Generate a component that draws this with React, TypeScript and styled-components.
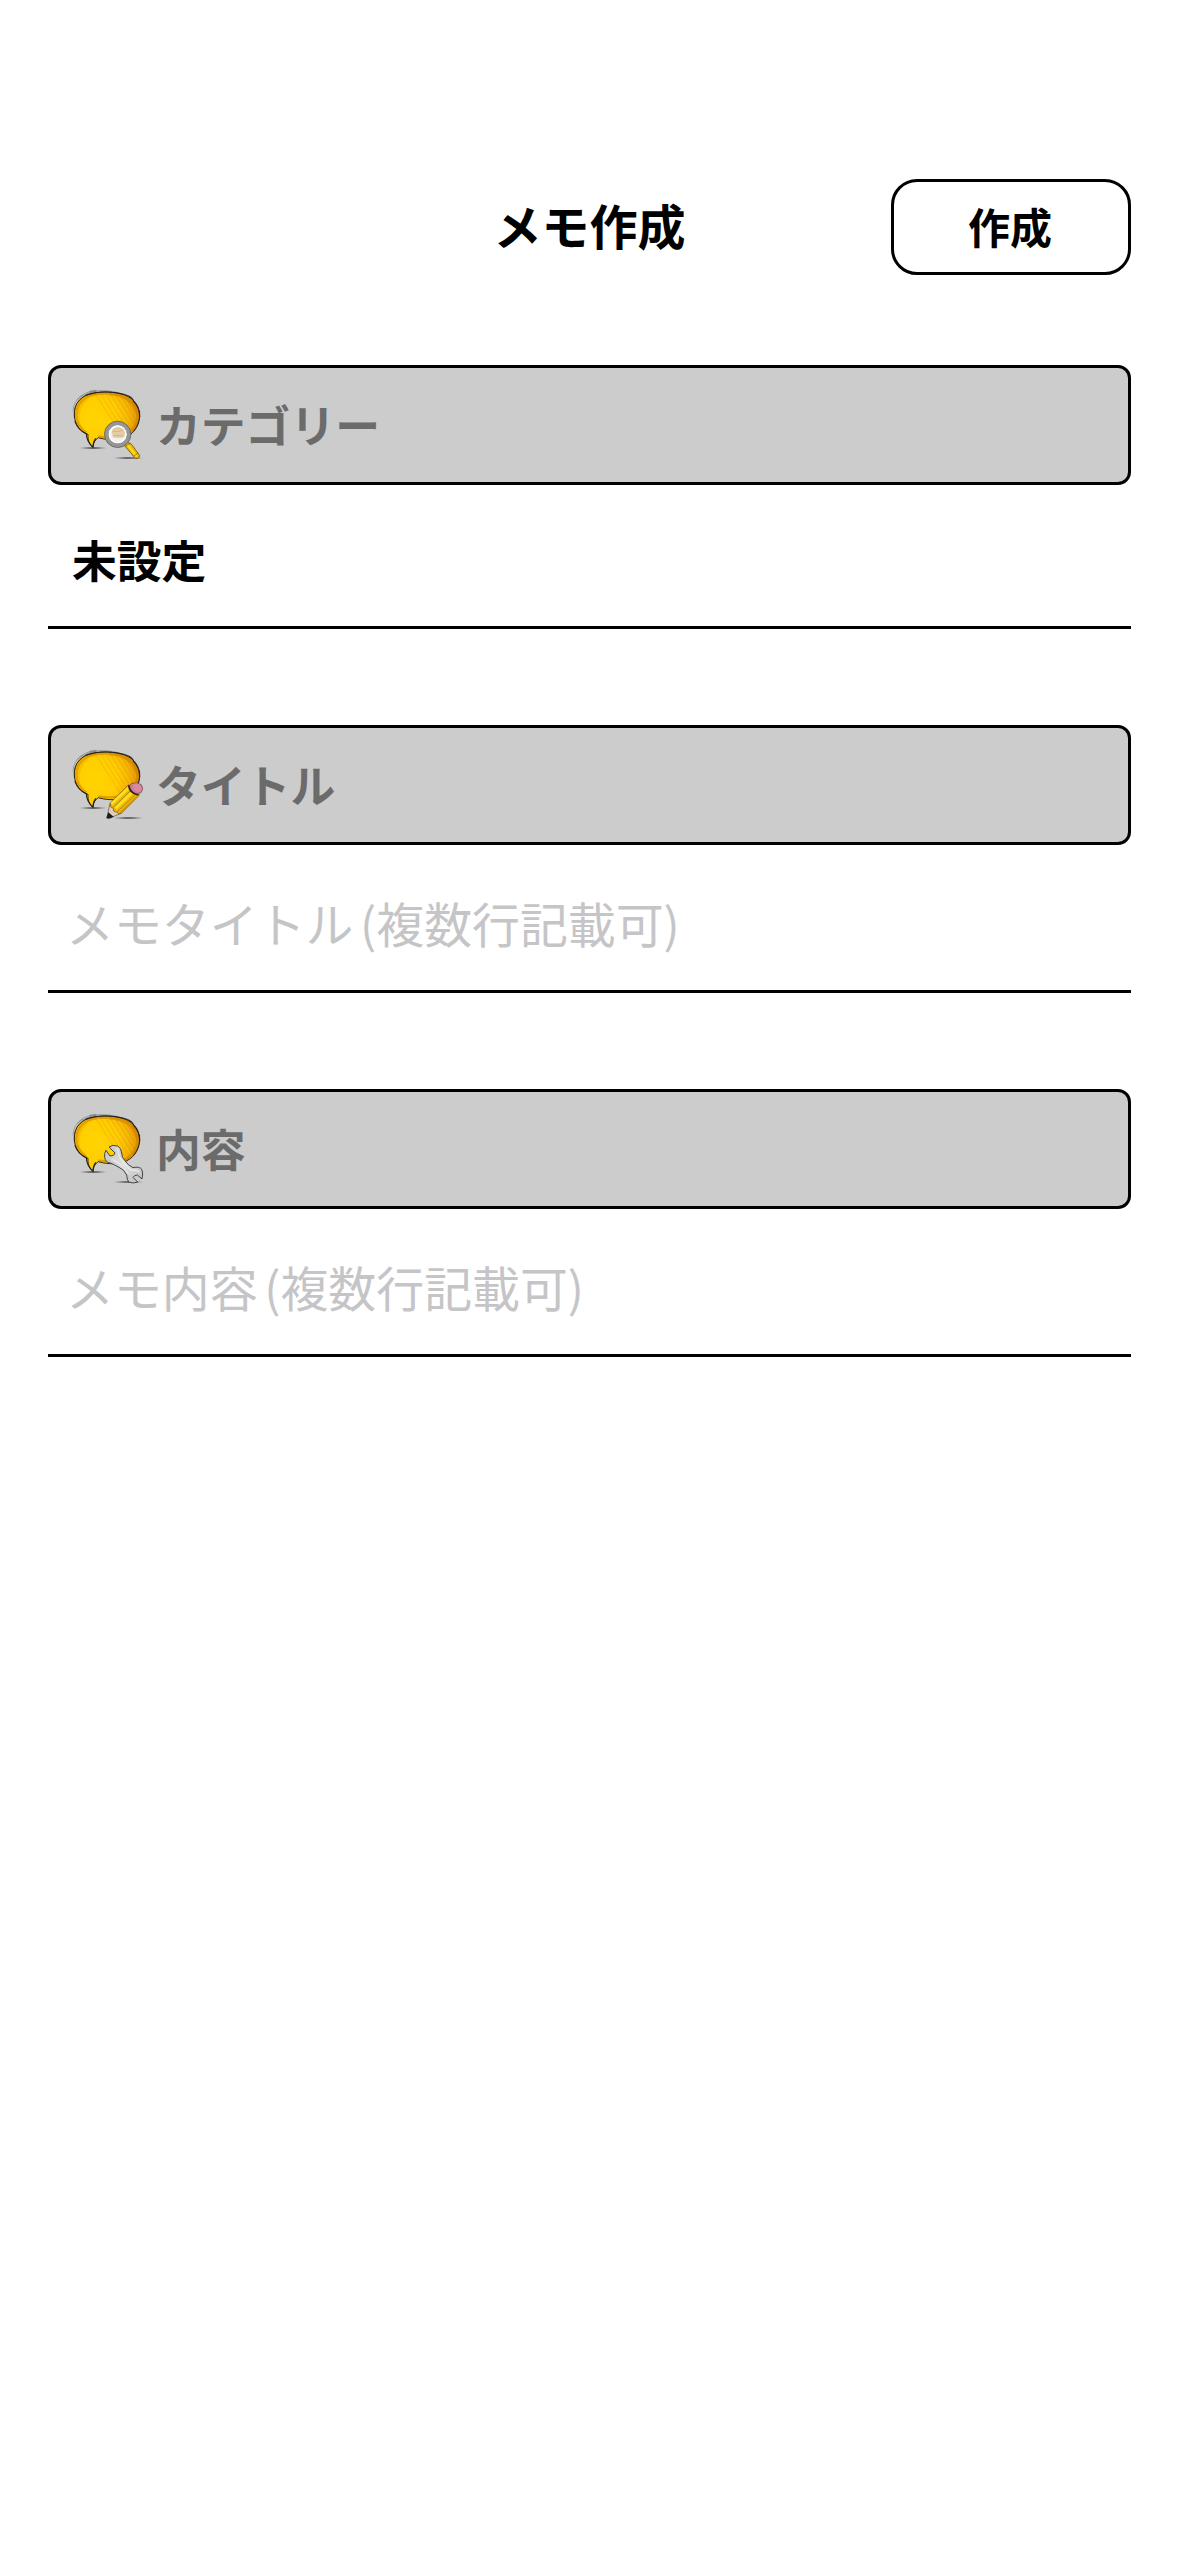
import React from "react";
import styled, { createGlobalStyle } from "styled-components";

const GlobalStyle = createGlobalStyle`
  * { box-sizing: border-box; }
  body {
    margin: 0;
    background: #fff;
    color: #000;
    font-family: "Noto Sans CJK JP", sans-serif;
  }
`;

const Screen = styled.main`
  display: flex;
  flex-direction: column;
  width: 1179px;
  min-height: 2556px;
  padding: 179px 48px 0;
  background: #fff;
`;

const Header = styled.header`
  display: grid;
  grid-template-columns: 240px 1fr 240px;
  align-items: center;
  height: 96px;
  margin-bottom: 90px;
`;

const Title = styled.h1`
  grid-column: 2;
  margin: 0;
  padding-bottom: 6px;
  text-align: center;
  font-size: 48px;
  line-height: 90px;
  font-weight: 700;
`;

const CreateButton = styled.button`
  height: 96px;
  padding: 0 2px 3px 0;
  border: 3px solid #000;
  border-radius: 26px;
  background: #fff;
  color: #000;
  font-family: inherit;
  font-size: 42px;
  line-height: 86px;
  font-weight: 700;
`;

const Section = styled.section<{ $height: number }>`
  display: flex;
  flex-direction: column;
  height: ${(p) => p.$height}px;
  margin-bottom: 96px;
  border-bottom: 3px solid #000;
`;

const SectionBar = styled.div`
  display: flex;
  align-items: center;
  flex: none;
  gap: 9px;
  height: 120px;
  padding-left: 16px;
  border: 3px solid #000;
  border-radius: 13px;
  background: #ccc;
`;

const SectionLabel = styled.h2`
  margin: 0;
  padding-bottom: 3px;
  font-size: 44.8px;
  line-height: 111px;
  font-weight: 700;
  color: #6b6b6b;
`;

const Value = styled.p`
  margin: 0;
  padding: 32px 0 0 24px;
  font-size: 44.8px;
  line-height: 84px;
  font-weight: 700;
`;

const MemoInput = styled.input`
  width: 100%;
  height: 84px;
  margin-top: 35px;
  padding: 0 0 0 18px;
  border: 0;
  outline: 0;
  background: transparent;
  font-family: inherit;
  font-size: 47.9px;
  font-weight: 400;
  word-spacing: -4px;
  &::placeholder { color: #c5c5c7; opacity: 1; }
`;

const IconSvg = styled.svg`
  flex: none;
  width: 80px;
  height: 80px;
`;

const BUBBLE =
  "M80 176 C60 166 47 146 46 120 C44 84 68 60 105 54 C130 48 168 50 196 60 C226 70 243 96 242 125 C240 156 222 180 192 190 C166 197 138 194 118 188 C109 194 104 201 102 216 C90 207 86 194 87 178 Z";

const BubbleIcon = ({ id, children }: { id: string; children: React.ReactNode }) => (
  <IconSvg viewBox="24 30 240 240" aria-hidden="true">
    <defs>
      <radialGradient id={`${id}-fill`} gradientUnits="userSpaceOnUse" cx="105" cy="130" r="142">
        <stop offset="0" stopColor="#ffd400" />
        <stop offset="0.5" stopColor="#ffcd00" />
        <stop offset="0.72" stopColor="#f5b400" />
        <stop offset="1" stopColor="#d88400" />
      </radialGradient>
      <radialGradient id={`${id}-shade`}>
        <stop offset="0" stopColor="#111" stopOpacity="0.95" />
        <stop offset="0.5" stopColor="#444" stopOpacity="0.55" />
        <stop offset="1" stopColor="#888" stopOpacity="0" />
      </radialGradient>
      <linearGradient id={`${id}-metal`} x1="0" y1="0" x2="1" y2="1">
        <stop offset="0" stopColor="#c2c2c2" />
        <stop offset="0.5" stopColor="#e0e0e0" />
        <stop offset="1" stopColor="#bcbcbc" />
      </linearGradient>
      <clipPath id={`${id}-clip`}>
        <path d={BUBBLE} />
      </clipPath>
    </defs>
    <ellipse cx="102" cy="219" rx="46" ry="4" fill={`url(#${id}-shade)`} />
    <ellipse cx="208" cy="249" rx="50" ry="4" fill={`url(#${id}-shade)`} />
    <path d={BUBBLE} fill={`url(#${id}-fill)`} />
    <g clipPath={`url(#${id}-clip)`} fill="none">
      <path
        d="M110 58 L192 186 M124 56 L204 184 M138 54 L214 178 M152 54 L224 170 M166 54 L232 160 M180 56 L238 148 M192 58 L242 136"
        stroke="#e8a200" strokeWidth="2" opacity="0.7"
      />
      <path
        d="M146 54 L218 172 M160 54 L228 164 M174 56 L236 152 M188 58 L240 140"
        stroke="#ffd93a" strokeWidth="1.5" opacity="0.5"
      />
      <path d="M150 56 Q225 62 236 118 Q238 160 190 188" stroke="#c97900" strokeWidth="9" opacity="0.5" />
      <path d="M82 174 Q50 150 52 116 Q54 78 92 62 Q130 50 186 60" stroke="#d99000" strokeWidth="8" opacity="0.75" />
      <path d="M58 142 Q50 100 84 70" stroke="#eea800" strokeWidth="10" opacity="0.4" />
      <path d="M118 184 Q160 192 200 180" stroke="#c98400" strokeWidth="7" opacity="0.6" />
    </g>
    <path d={BUBBLE} fill="none" stroke="#3a2a08" strokeWidth="3" strokeLinejoin="round" />
    <g fill="none" stroke="#222" strokeLinecap="round">
      <path d="M80 61 Q122 46 172 53 T224 80 Q242 98 242 125" strokeWidth="3.2" opacity="0.9" />
      <path d="M46 128 Q42 94 64 72 T112 50" strokeWidth="2.4" opacity="0.6" />
      <path d="M48 140 Q58 166 82 176 Q82 198 102 217 Q102 200 110 191" strokeWidth="3.4" />
      <path d="M92 49 Q145 41 192 57 M54 74 Q74 50 110 46 M42 108 Q42 76 72 60 M205 62 Q230 75 239 99" strokeWidth="2" opacity="0.4" />
      <path d="M242 108 Q246 140 224 168" strokeWidth="2.4" opacity="0.7" />
    </g>
    {children}
  </IconSvg>
);

const SearchBubble = () => (
  <BubbleIcon id="search">
    <path d="M194 209 L205 203 Q215 203 220 211 L242 242 Q242 251 230 251 Z" fill="#efb900" stroke="#70520a" strokeWidth="2.5" />
    <path d="M205 208 L233 245" stroke="#ffdc19" strokeWidth="6" />
    <path d="M198 214 L216 204 M224 243 L238 234" stroke="#876006" strokeWidth="2" />
    <circle cx="176" cy="178" r="35" fill="#f1f0ee" />
    <circle cx="176" cy="178" r="34" fill="none" stroke="#969696" strokeWidth="11" />
    <circle cx="176" cy="178" r="39.5" fill="none" stroke="#5a5a5a" strokeWidth="2.4" />
    <circle cx="176" cy="178" r="28" fill="none" stroke="#777" strokeWidth="2" />
    <circle cx="176" cy="178" r="25" fill="none" stroke="#fff" strokeWidth="4" />
    <path d="M158 174 Q158 157 177 155 Q195 157 198 174 L196 185 Q181 192 162 187 Z" fill="#e4cda5" />
    <path d="M161 168 Q173 173 193 165 M162 184 Q177 178 193 184" stroke="#cfa267" strokeWidth="3" fill="none" opacity="0.6" />
  </BubbleIcon>
);

const PencilBubble = () => (
  <BubbleIcon id="pencil">
    <path d="M153 205 L144 247 Q146 252 152 249 L187 235 Z" fill="#dfcec0" stroke="#5a4a3a" strokeWidth="2" />
    <path d="M148 232 L142 249 Q148 254 164 245 Z" fill="#1c1c1c" />
    <path d="M153 205 L208 150 Q232 151 241 180 L188 234 Q180 240 173 231 Q162 232 163 220 Q152 218 153 205 Z" fill="#f3b900" stroke="#604400" strokeWidth="2" />
    <path d="M158 206 L212 155 M170 220 L224 168" stroke="#ffdd22" strokeWidth="8" />
    <path d="M163 217 L219 162 M175 230 L232 176" stroke="#79751b" strokeWidth="2" />
    <path d="M184 233 L238 181" stroke="#db9000" strokeWidth="5" />
    <path d="M211 153 Q214 171 234 178 L247 172 Q255 160 247 149 Q235 140 218 145 Z" fill="#cc7992" stroke="#68434f" strokeWidth="2" />
    <ellipse cx="235" cy="158" rx="15" ry="11" transform="rotate(38 235 158)" fill="#d9899f" />
    <path d="M209 151 Q211 174 238 180" fill="none" stroke="#27231d" strokeWidth="5" />
  </BubbleIcon>
);

const WrenchBubble = () => (
  <BubbleIcon id="wrench">
    <path
      d="M150 144 Q160 136 176 141 Q187 147 188 162 Q188 176 197 184 Q207 199 222 206 Q241 201 249 212 Q253 224 249 240 L235 228 Q225 229 222 235 L236 249 Q223 255 209 249 Q204 242 203 228 Q195 211 180 205 Q164 196 154 192 Q139 190 137 175 Q135 163 141 154 L153 171 Q166 172 168 162 Z"
      fill="url(#wrench-metal)" stroke="#444" strokeWidth="3" strokeLinejoin="round"
    />
    <path d="M170 146 Q180 153 179 167 Q188 190 215 213 Q234 212 241 220 M160 181 Q185 192 208 225" fill="none" stroke="#eee" strokeWidth="4" opacity="0.8" />
    <path d="M145 181 Q160 189 182 200 Q202 212 210 239" fill="none" stroke="#999" strokeWidth="1.5" opacity="0.6" />
  </BubbleIcon>
);

export default function App() {
  return (
    <>
      <GlobalStyle />
      <Screen>
        <Header>
          <Title>メモ作成</Title>
          <CreateButton>作成</CreateButton>
        </Header>
        <Section $height={264}>
          <SectionBar>
            <SearchBubble />
            <SectionLabel>カテゴリー</SectionLabel>
          </SectionBar>
          <Value>未設定</Value>
        </Section>
        <Section $height={268}>
          <SectionBar>
            <PencilBubble />
            <SectionLabel>タイトル</SectionLabel>
          </SectionBar>
          <MemoInput placeholder="メモタイトル (複数行記載可)" />
        </Section>
        <Section $height={268}>
          <SectionBar>
            <WrenchBubble />
            <SectionLabel>内容</SectionLabel>
          </SectionBar>
          <MemoInput placeholder="メモ内容 (複数行記載可)" />
        </Section>
      </Screen>
    </>
  );
}
